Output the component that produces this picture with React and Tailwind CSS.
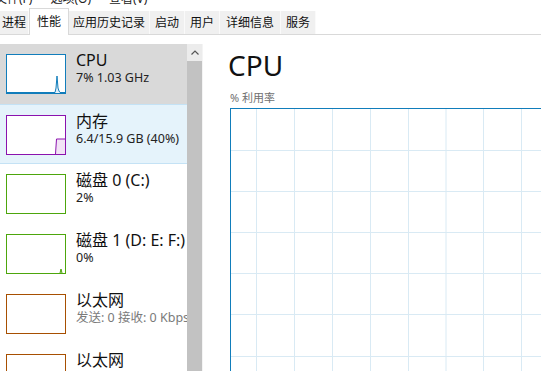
import { Fragment } from 'react'

const TABS = [
  { label: '进程', w: 'w-[29px]' },
  { label: '性能', w: 'w-[40px]', active: true },
  { label: '应用历史记录', w: 'w-[81px]' },
  { label: '启动', w: 'w-[35px]' },
  { label: '用户', w: 'w-[35px]' },
  { label: '详细信息', w: 'w-[61px]' },
  { label: '服务', w: 'w-[35px]' },
]

const ITEMS = [
  { key: 'cpu', title: 'CPU', sub: '7% 1.03 GHz', color: '#117dbb', state: 'selected' },
  { key: 'mem', title: '内存', sub: '6.4/15.9 GB (40%)', color: '#8b12ae', state: 'hover' },
  { key: 'disk0', title: '磁盘 0 (C:)', sub: '2%', color: '#4da60c' },
  { key: 'disk1', title: '磁盘 1 (D: E: F:)', sub: '0%', color: '#4da60c' },
  { key: 'eth0', title: '以太网', sub: '发送: 0 接收: 0 Kbps', color: '#a74f01', muted: true },
  { key: 'eth1', title: '以太网', sub: '发送: 0 接收: 0 Kbps', color: '#a74f01', muted: true },
]

const Thumb = ({ item }) => (
  <div className="mt-[10px] h-[40px] w-[60px] shrink-0 border bg-white" style={{ borderColor: item.color }}>
    <svg width="58" height="38" viewBox="0 0 58 38">
      {item.key === 'cpu' && (
        <polyline points="0,37.5 48,37.5 49,33 50,21 51,33 52,36 53,37.5 58,37.5" fill="#dcecf7" stroke="#117dbb" strokeWidth="1" />
      )}
      {item.key === 'mem' && (
        <Fragment>
          <polygon points="49,38 49.5,23 58,23 58,38" fill="#f2e3f6" />
          <polyline points="48.5,38 49.5,23 58,23" fill="none" stroke="#8b12ae" strokeWidth="1" />
        </Fragment>
      )}
      {item.key === 'disk1' && <polyline points="53,38 54,34 55,38" fill="#cfe6bd" stroke="#4da60c" strokeWidth="1" />}
    </svg>
  </div>
)

const SideItem = ({ item }) => {
  const bg =
    item.state === 'selected'
      ? 'bg-[#d9d9d9]'
      : item.state === 'hover'
        ? 'bg-[#e5f3fb] border-y border-[#c4e2f5]'
        : 'bg-white'
  return (
    <div className={`flex h-[60px] shrink-0 overflow-hidden pl-[6px] ${bg}`}>
      <Thumb item={item} />
      <div className="ml-[10px] min-w-0 whitespace-nowrap pt-[6px]">
        <p className="text-[16px] leading-[20px] text-[#111]">{item.title}</p>
        <p className={`text-[12.5px] leading-[16px] ${item.muted ? 'text-[#7a7a7a]' : 'text-[#222]'}`}>{item.sub}</p>
      </div>
    </div>
  )
}

const Grid = () => {
  const xs = [25.5, 63.5, 101.5, 139.5, 177.5, 215, 252.5, 290.5, 328.5]
  const ys = [41.5, 82.5, 123.5, 164.5, 205.5, 247.5]
  return (
    <svg width="330" height="270" viewBox="0 0 330 270">
      {xs.map((x) => (
        <line key={`x${x}`} x1={x} y1="0" x2={x} y2="270" stroke="#d9eaf4" strokeWidth="1" />
      ))}
      {ys.map((y) => (
        <line key={`y${y}`} x1="0" y1={y} x2="330" y2={y} stroke="#d9eaf4" strokeWidth="1" />
      ))}
    </svg>
  )
}

const App = () => {
  return (
    <div className="flex h-[371px] w-[541px] flex-col overflow-hidden bg-white font-['Noto_Sans','Noto_Sans_CJK_SC',sans-serif] text-[#111]">
      {/* menu bar, mostly cut off */}
      <div className="h-[9px] shrink-0 overflow-hidden">
        <div className="-mt-[10px] flex gap-[18px] text-[12px] leading-[18px] text-[#222]">
          <span className="-ml-[5px]">文件(F)</span>
          <span>选项(O)</span>
          <span>查看(V)</span>
        </div>
      </div>

      {/* tabs */}
      <div className="flex h-[26px] shrink-0 items-end border-b border-[#d9d9d9]">
        {TABS.map((t) =>
          t.active ? (
            <div key={t.label} className={`relative -mb-px flex h-[27px] items-center justify-center border-x border-t border-[#d9d9d9] bg-white text-[12px] text-[#111] ${t.w}`}>
              {t.label}
            </div>
          ) : (
            <div key={t.label} className={`flex h-[23px] items-center justify-center border-r border-[#fafafa] bg-[#f0f0f0] text-[12px] text-[#111] ${t.w}`}>
              {t.label}
            </div>
          ),
        )}
      </div>

      {/* body */}
      <div className="mt-[9px] flex min-h-0 flex-1">
        <div className="flex w-[187px] shrink-0 flex-col overflow-hidden">
          {ITEMS.map((item) => (
            <SideItem key={item.key} item={item} />
          ))}
        </div>

        <div className="flex w-[16px] shrink-0 flex-col border-r border-[#f4f4f4]">
          <div className="flex h-[17px] items-center justify-center bg-[#ececec]">
            <svg width="8" height="5" viewBox="0 0 8 5">
              <polyline points="0.5,4.5 4,1 7.5,4.5" fill="none" stroke="#555" strokeWidth="1.2" />
            </svg>
          </div>
          <div className="flex-1 bg-[#c2c2c2]" />
        </div>

        <div className="min-w-0 flex-1 overflow-hidden pl-[25px] pt-[4px]">
          <h1 className="text-[28px] font-normal leading-[34px] text-[#111]">CPU</h1>
          <p className="ml-[2px] mt-[8px] text-[11px] leading-[16px] text-[#707070]">% 利用率</p>
          <div className="ml-[2px] mt-[2px] h-[300px] w-[360px] border-l border-t border-[#117dbb]">
            <Grid />
          </div>
        </div>
      </div>
    </div>
  )
}

export default App
